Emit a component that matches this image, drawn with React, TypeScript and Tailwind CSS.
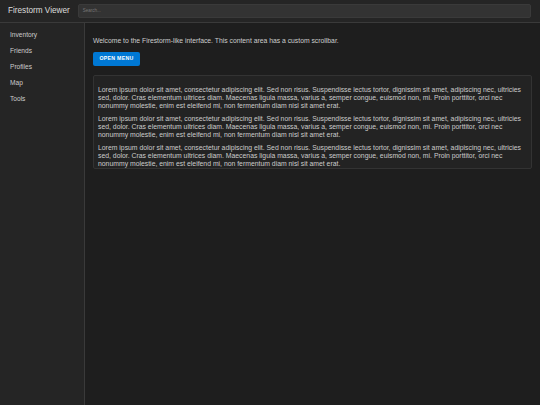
import React from "react";

const lorem =
  "Lorem ipsum dolor sit amet, consectetur adipiscing elit. Sed non risus. Suspendisse lectus tortor, dignissim sit amet, adipiscing nec, ultricies sed, dolor. Cras elementum ultrices diam. Maecenas ligula massa, varius a, semper congue, euismod non, mi. Proin porttitor, orci nec nonummy molestie, enim est eleifend mi, non fermentum diam nisl sit amet erat.";

export default function App() {
  const items = ["Inventory", "Friends", "Profiles", "Map", "Tools"];
  return (
    <div
      className="flex h-[405px] w-[540px] flex-col overflow-hidden bg-[#1e1e1e] text-[#cccccc]"
      style={{ fontFamily: '"Liberation Sans", Arial, sans-serif' }}
    >
      <header className="flex h-[23px] shrink-0 items-center gap-2 border-b border-[#3a3a3a] bg-[#252525] pl-2 pr-[9px]">
        <span className="text-[8.2px] leading-none text-[#dddddd]">Firestorm Viewer</span>
        <div className="flex h-[14px] flex-1 items-center rounded-[2px] border border-[#3a3a3a] bg-[#333333] px-[4px]">
          <span className="text-[4.5px] text-[#777777]">Search...</span>
        </div>
      </header>
      <div className="flex flex-1">
        <aside className="w-[85px] shrink-0 border-r border-[#3a3a3a] bg-[#252525] pt-[4px]">
          {items.map((i) => (
            <div key={i} className="flex h-[16px] items-center pl-[10px] text-[6.6px] text-[#cccccc]">
              {i}
            </div>
          ))}
        </aside>
        <main className="flex-1 pl-[8px] pr-[8px] pt-[14px]">
          <p className="text-[6.8px] leading-[8px] text-[#cccccc]">
            Welcome to the Firestorm-like interface. This content area has a custom scrollbar.
          </p>
          <button className="mt-[7px] flex h-[14px] w-[47px] items-center justify-center rounded-[2px] bg-[#0078d4] text-[5.2px] font-bold tracking-[0.3px] text-white">
            OPEN MENU
          </button>
          <div className="mt-[9px] h-[94px] overflow-hidden rounded-[2px] border border-[#333333] bg-[#232323] px-[4px] pt-[10px]">
            {[0, 1, 2].map((k) => (
              <p key={k} className="mb-[5px] text-[6.85px] leading-[8px] text-[#cccccc]">
                {lorem}
              </p>
            ))}
          </div>
        </main>
      </div>
    </div>
  );
}
